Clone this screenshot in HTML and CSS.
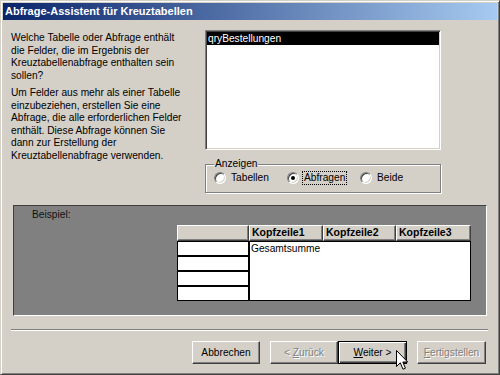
FILE: index.html
```html
<!DOCTYPE html>
<html lang="de">
<head>
    <meta charset="UTF-8">
    <meta name="viewport" content="width=device-width, initial-scale=1.0">
    <title>Abfrage-Assistent für Kreuztabellen</title>
    <link rel="stylesheet" href="styles.css">
</head>
<body>
    <div class="window">
        <div class="titlebar">Abfrage-Assistent für Kreuztabellen</div>
        <div class="content">
            <div class="top">
                <div class="intro">
                    <p>Welche Tabelle oder Abfrage enthält<br>die Felder, die im Ergebnis der<br>Kreuztabellenabfrage enthalten sein<br>sollen?</p>
                    <p>Um Felder aus mehr als einer Tabelle<br>einzubeziehen, erstellen Sie eine<br>Abfrage, die alle erforderlichen Felder<br>enthält. Diese Abfrage können Sie<br>dann zur Erstellung der<br>Kreuztabellenabfrage verwenden.</p>
                </div>
                <div class="side">
                    <div class="listbox">
                        <div class="item selected">qryBestellungen</div>
                    </div>
                    <fieldset class="group">
                        <legend>Anzeigen</legend>
                        <div class="opt"><span class="radio"></span><span class="cap">Tabellen</span></div>
                        <div class="opt"><span class="radio on"></span><span class="cap focus">Abfragen</span></div>
                        <div class="opt"><span class="radio"></span><span class="cap">Beide</span></div>
                    </fieldset>
                </div>
            </div>

            <div class="sample">
                <div class="sample-label">Beispiel:</div>
                <div class="xtab">
                    <div class="head-row">
                        <div class="hcell c1"></div>
                        <div class="hcell c2">Kopfzeile1</div>
                        <div class="hcell c3">Kopfzeile2</div>
                        <div class="hcell c4">Kopfzeile3</div>
                    </div>
                    <div class="body-row">
                        <div class="rowheads">
                            <div class="rcell"></div>
                            <div class="rcell"></div>
                            <div class="rcell"></div>
                            <div class="rcell"></div>
                        </div>
                        <div class="values">Gesamtsumme</div>
                    </div>
                </div>
            </div>

            <div class="sep"></div>

            <div class="buttons">
                <button class="btn">Abbrechen</button>
                <button class="btn" disabled>&lt; <u>Z</u>urück</button>
                <button class="btn default"><u>W</u>eiter &gt;</button>
                <button class="btn wide" disabled><u>F</u>ertigstellen</button>
            </div>
        </div>

        <svg class="cursor" width="13" height="21" viewBox="0 0 13 21">
            <path d="M0.5 0.5 V16.5 L4.3 12.8 L7 19.2 L9.4 18.2 L6.8 12 H11.7 Z" fill="#fff" stroke="#000" stroke-width="1" stroke-linejoin="miter"/>
        </svg>
    </div>
</body>
</html>
```

FILE: styles.css
```css
body {
    margin: 0;
    background: #d4d0c8;
    font-family: "Liberation Sans", Arial, sans-serif;
    font-size: 10.2px;
    color: #000;
}
.window {
    position: relative;
    width: 500px;
    height: 375px;
    box-sizing: border-box;
    padding: 2px;
    background: #d4d0c8;
    border: 1px solid;
    border-color: #d4d0c8 #404040 #404040 #d4d0c8;
    box-shadow: inset 1px 1px #fff, inset -1px -1px #808080;
}
.titlebar {
    height: 17px;
    line-height: 17px;
    padding-left: 2px;
    color: #fff;
    font-size: 11px;
    font-weight: bold;
    background: linear-gradient(to right, #0a246a, #a6caf0);
}
.content {
    padding-top: 10px;
}
.top {
    display: flex;
}
.intro {
    width: 194px;
    margin-left: 8px;
    padding-top: 2px;
    line-height: 12.5px;
}
.intro p {
    margin: 0;
}
.intro p + p {
    margin-top: 5px;
}
.listbox {
    width: 236px;
    height: 120px;
    box-sizing: border-box;
    padding: 1px;
    background: #fff;
    border: 1px solid;
    border-color: #808080 #fff #fff #808080;
    box-shadow: inset 1px 1px #404040, inset -1px -1px #d4d0c8;
}
.item {
    height: 13px;
    line-height: 13px;
    padding-left: 1px;
}
.item.selected {
    background: #000;
    color: #fff;
}
.group {
    display: flex;
    width: 236px;
    box-sizing: border-box;
    min-width: 0;
    margin: 8px 0 0;
    padding: 1px 0 7px 8px;
    border: 1px solid #808080;
    box-shadow: inset 1px 1px #fff, 1px 1px #fff;
}
.group legend {
    padding: 0 1px;
    line-height: 12px;
    background: #d4d0c8;
}
.opt {
    display: flex;
    align-items: center;
    gap: 3px;
    width: 73px;
}
.radio {
    position: relative;
    width: 12px;
    height: 12px;
    box-sizing: border-box;
    border-radius: 50%;
    background: #fff;
    border: 1px solid;
    border-color: #808080 #fff #fff #808080;
    box-shadow: inset 1px 1px #404040, inset -1px -1px #d4d0c8;
}
.radio.on::after {
    content: "";
    position: absolute;
    left: 3px;
    top: 3px;
    width: 4px;
    height: 4px;
    border-radius: 50%;
    background: #000;
}
.cap {
    padding: 0 1px;
    line-height: 12px;
    border: 1px dotted transparent;
}
.cap.focus {
    border-color: #000;
}
.sample {
    display: flex;
    flex-direction: column;
    height: 111px;
    box-sizing: border-box;
    margin: 12px 10px 0;
    background: #808080;
    border: 1px solid;
    border-color: #404040 #fff #fff #404040;
}
.sample-label {
    margin: 3px 0 0 18px;
    line-height: 12px;
    color: #101010;
}
.xtab {
    align-self: flex-end;
    margin: 4px 15px 0 0;
}
.head-row {
    display: flex;
}
.hcell {
    height: 16px;
    box-sizing: border-box;
    padding-left: 2px;
    line-height: 13px;
    font-size: 10.5px;
    font-weight: bold;
    background: #d4d0c8;
    border: 1px solid;
    border-color: #fff #404040 #404040 #fff;
    box-shadow: inset -1px -1px #808080;
}
.c1 { width: 72px; }
.c2 { width: 74px; }
.c3 { width: 73px; }
.c4 { width: 75px; }
.body-row {
    display: flex;
}
.rowheads {
    width: 72px;
}
.rcell {
    height: 15px;
    box-sizing: border-box;
    background: #fff;
    border: 1px solid #000;
}
.values {
    width: 222px;
    height: 60px;
    box-sizing: border-box;
    padding: 1px 0 0 1px;
    line-height: 12px;
    background: #fff;
    border: 1px solid #000;
}
.sep {
    height: 1px;
    margin: 13px 9px 0 8px;
    background: #808080;
    border-bottom: 1px solid #fff;
}
.buttons {
    display: flex;
    justify-content: flex-end;
    margin-top: 10px;
    padding-right: 11px;
}
.btn {
    width: 68px;
    height: 23px;
    box-sizing: border-box;
    padding: 0;
    font: inherit;
    color: #000;
    background: #d4d0c8;
    border: 1px solid;
    border-color: #fff #404040 #404040 #fff;
    box-shadow: inset -1px -1px #808080;
}
.btn + .btn {
    margin-left: 0;
}
.btn:first-child,
.btn.default {
    margin-right: 10px;
}
.btn.default {
    width: 69px;
    border-color: #000;
    box-shadow: inset 1px 1px #fff, inset -1px -1px #404040, inset -2px -2px #808080;
}
.btn.wide {
    width: 69px;
}
.btn:disabled {
    color: #808080;
    text-shadow: 1px 1px #fff;
}
.cursor {
    position: absolute;
    left: 395px;
    top: 349px;
}
```
